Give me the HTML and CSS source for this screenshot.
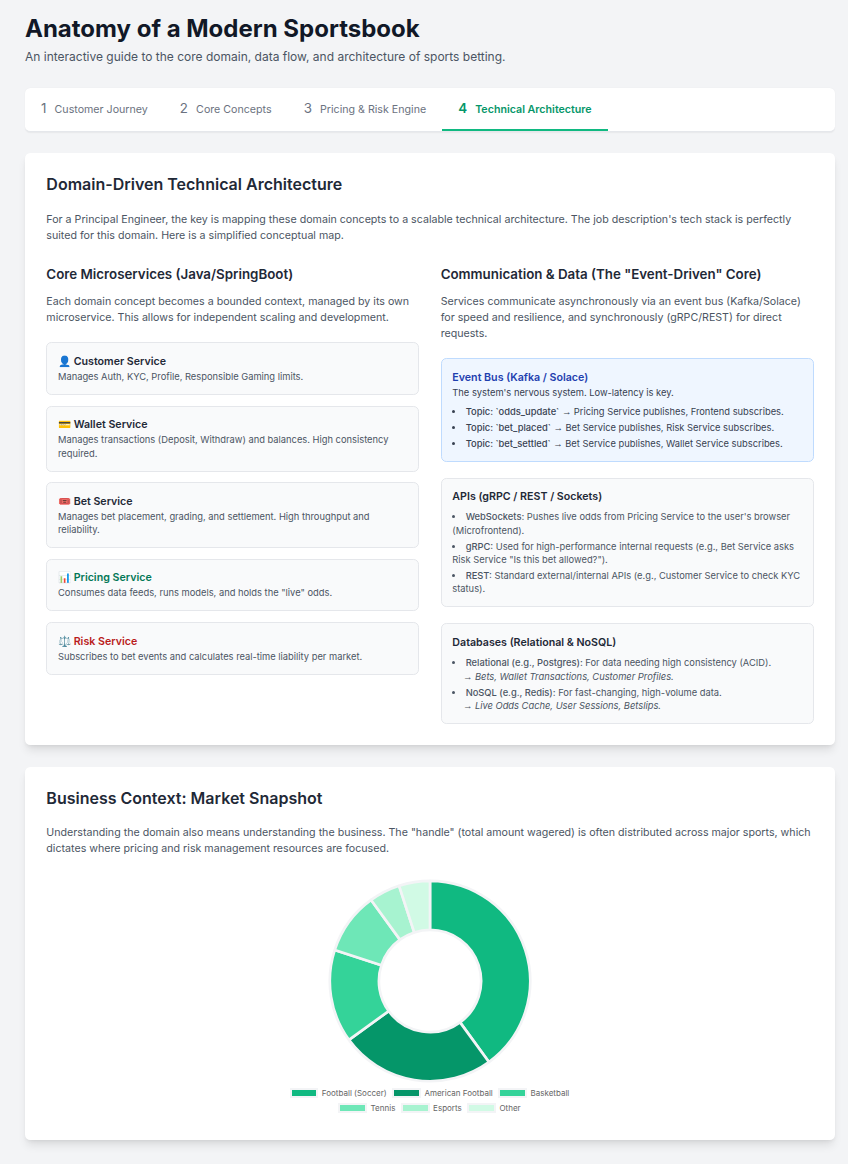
FILE: index.html
```html
<!DOCTYPE html>
<html lang="en">
<head>
<meta charset="utf-8">
<title>Anatomy of a Modern Sportsbook</title>
<link rel="stylesheet" href="styles.css">
</head>
<body>
<div class="page">
  <header class="header">
    <h1>Anatomy of a Modern Sportsbook</h1>
    <p>An interactive guide to the core domain, data flow, and architecture of sports betting.</p>
  </header>
  <nav class="tabs">
    <a class="tab"><span class="num">1</span>Customer Journey</a>
    <a class="tab"><span class="num">2</span>Core Concepts</a>
    <a class="tab"><span class="num">3</span>Pricing &amp; Risk Engine</a>
    <a class="tab active"><span class="num">4</span>Technical Architecture</a>
  </nav>
  <section class="card">
    <h2>Domain-Driven Technical Architecture</h2>
    <p class="lead">For a Principal Engineer, the key is mapping these domain concepts to a scalable technical architecture. The job description's tech stack is perfectly suited for this domain. Here is a simplified conceptual map.</p>
    <div class="columns">
      <div>
        <h3>Core Microservices (Java/SpringBoot)</h3>
        <p class="intro">Each domain concept becomes a bounded context, managed by its own microservice. This allows for independent scaling and development.</p>
        <div class="stack services">
          <div class="box"><h4>👤 Customer Service</h4><p>Manages Auth, KYC, Profile, Responsible Gaming limits.</p></div>
          <div class="box"><h4>💳 Wallet Service</h4><p>Manages transactions (Deposit, Withdraw) and balances. High consistency required.</p></div>
          <div class="box"><h4>🎟️ Bet Service</h4><p>Manages bet placement, grading, and settlement. High throughput and reliability.</p></div>
          <div class="box"><h4 class="green">📊 Pricing Service</h4><p>Consumes data feeds, runs models, and holds the "live" odds.</p></div>
          <div class="box"><h4 class="red">⚖️ Risk Service</h4><p>Subscribes to bet events and calculates real-time liability per market.</p></div>
        </div>
      </div>
      <div>
        <h3>Communication &amp; Data (The "Event-Driven" Core)</h3>
        <p class="intro">Services communicate asynchronously via an event bus (Kafka/Solace) for speed and resilience, and synchronously (gRPC/REST) for direct requests.</p>
        <div class="stack">
          <div class="box bus">
            <h4>Event Bus (Kafka / Solace)</h4>
            <p>The system's nervous system. Low-latency is key.</p>
            <ul>
              <li><b>Topic: `odds_update`</b> <i class="arrow">→</i> Pricing Service publishes, Frontend subscribes.</li>
              <li><b>Topic: `bet_placed`</b> <i class="arrow">→</i> Bet Service publishes, Risk Service subscribes.</li>
              <li><b>Topic: `bet_settled`</b> <i class="arrow">→</i> Bet Service publishes, Wallet Service subscribes.</li>
            </ul>
          </div>
          <div class="box">
            <h4>APIs (gRPC / REST / Sockets)</h4>
            <ul>
              <li><b>WebSockets:</b> Pushes live odds from Pricing Service to the user's browser (Microfrontend).</li>
              <li><b>gRPC:</b> Used for high-performance internal requests (e.g., Bet Service asks Risk Service "Is this bet allowed?").</li>
              <li><b>REST:</b> Standard external/internal APIs (e.g., Customer Service to check KYC status).</li>
            </ul>
          </div>
          <div class="box">
            <h4>Databases (Relational &amp; NoSQL)</h4>
            <ul>
              <li><b>Relational (e.g., Postgres):</b> For data needing high consistency (ACID).<br><span class="example"><i class="arrow">→</i> Bets, Wallet Transactions, Customer Profiles.</span></li>
              <li><b>NoSQL (e.g., Redis):</b> For fast-changing, high-volume data.<br><span class="example"><i class="arrow">→</i> Live Odds Cache, User Sessions, Betslips.</span></li>
            </ul>
          </div>
        </div>
      </div>
    </div>
  </section>
  <section class="card market">
    <h2>Business Context: Market Snapshot</h2>
    <p class="lead">Understanding the domain also means understanding the business. The "handle" (total amount wagered) is often distributed across major sports, which dictates where pricing and risk management resources are focused.</p>
    <div class="chart">
      <svg class="donut" viewBox="-101.8 -101.8 203.6 203.6" width="204" height="204">
        <g stroke="#f3f4f6" stroke-width="2.67" stroke-linejoin="bevel">
          <path fill="#10b981" d="M0-100A100 100 0 0 1 58.78 80.9L30 41.26A51 51 0 0 0 0-51Z"/>
          <path fill="#059669" d="M58.78 80.9A100 100 0 0 1-80.9 58.78L-41.26 30A51 51 0 0 0 30 41.26Z"/>
          <path fill="#34d399" d="M-80.9 58.78A100 100 0 0 1-95.11-30.9L-48.5-15.76A51 51 0 0 0-41.26 30Z"/>
          <path fill="#6ee7b7" d="M-95.11-30.9A100 100 0 0 1-58.78-80.9L-30-41.26A51 51 0 0 0-48.5-15.76Z"/>
          <path fill="#a7f3d0" d="M-58.78-80.9A100 100 0 0 1-30.9-95.11L-15.76-48.5A51 51 0 0 0-30-41.26Z"/>
          <path fill="#d1fae5" d="M-30.9-95.11A100 100 0 0 1 0-100L0-51A51 51 0 0 0-15.76-48.5Z"/>
        </g>
      </svg>
      <div class="legend">
        <div class="row"><span class="key k1">Football (Soccer)</span><span class="key k2">American Football</span><span class="key k3">Basketball</span></div>
        <div class="row"><span class="key k4">Tennis</span><span class="key k5">Esports</span><span class="key k6">Other</span></div>
      </div>
    </div>
  </section>
</div>
</body>
</html>
```
FILE: styles.css
```css
*, *::before { box-sizing: border-box; margin: 0; padding: 0; }
body {
  background: #f3f4f6;
  color: #1f2937;
  font: 10.667px/16px Inter, "Liberation Sans", sans-serif;
}
.page { padding: 16px 13px 24px 25px; }
.header { margin-bottom: 21.33px; }
.header h1 { font-size: 24px; line-height: 26.67px; font-weight: 700; color: #111827; }
.header p { margin-top: 5.33px; font-size: 12px; line-height: 18.67px; color: #4b5563; }

.tabs {
  display: flex;
  height: 43.67px;
  margin-bottom: 21.33px;
  background: #fff;
  border-bottom: 1px solid #e5e7eb;
  border-radius: 5.33px;
  box-shadow: 0 0.67px 1.33px rgba(0, 0, 0, 0.05);
}
.tab {
  display: flex;
  align-items: baseline;
  padding: 11.33px 16px 0;
  border-bottom: 2px solid transparent;
  color: #6b7280;
}
.tab .num { margin-right: 8.13px; font-size: 13.33px; line-height: 18.67px; }
.tab.active { color: #059669; border-color: #10b981; font-weight: 600; }

.card {
  margin-bottom: 21.33px;
  padding: 21.33px;
  background: #fff;
  border-radius: 5.33px;
  box-shadow: 0 6.67px 10px -2px rgba(0, 0, 0, 0.1), 0 2.67px 4px -2.67px rgba(0, 0, 0, 0.1);
}
h2 { font-size: 16px; line-height: 21.33px; font-weight: 600; }
.lead { margin-top: 16px; color: #4b5563; }
.columns {
  display: grid;
  grid-template-columns: 1fr 1fr;
  gap: 21.33px;
  margin-top: 21.33px;
}
h3 { font-size: 13.33px; line-height: 18.67px; font-weight: 600; }
.intro { margin-top: 10px; margin-bottom: 16.67px; color: #4b5563; }
.stack { display: flex; flex-direction: column; gap: 16px; }
.services { gap: 10.65px; }
.box {
  padding: 10.67px;
  background: #f9fafb;
  border: 1px solid #e5e7eb;
  border-radius: 5.33px;
  color: #4b5563;
  font-size: 9.333px;
  line-height: 13.32px;
}
.box h4 { font-size: 10.667px; line-height: 16px; font-weight: 600; color: #1f2937; }
.box .green { color: #047857; }
.box .red { color: #b91c1c; }
.box ul { margin-top: 5.33px; list-style: disc inside; }
.box li + li { margin-top: 2.67px; }
.box b { font-weight: 500; }
.bus { background: #eff6ff; border-color: #bfdbfe; color: #374151; }
.bus h4 { color: #1e40af; }
.example { margin-left: 10.67px; font-style: italic; }
.arrow { font-family: "Liberation Sans", sans-serif; font-style: normal; line-height: 1; }

.market { height: 373px; margin-bottom: 0; }
.chart { display: flex; flex-direction: column; align-items: center; margin-top: 21.33px; }
.donut { display: block; }
.legend { display: flex; flex-direction: column; gap: 5px; margin-top: 5px; }
.row { display: flex; justify-content: center; gap: 6.6px; }
.key {
  display: flex;
  align-items: center;
  gap: 3.5px;
  font-size: 8px;
  line-height: 10px;
  color: #666;
}
.key::before {
  content: "";
  width: 28.67px;
  height: 10px;
  margin-left: -1px;
  border: 2px solid #f3f4f6;
}
.k1::before { background: #10b981; }
.k2::before { background: #059669; }
.k3::before { background: #34d399; }
.k4::before { background: #6ee7b7; }
.k5::before { background: #a7f3d0; }
.k6::before { background: #d1fae5; }
```
